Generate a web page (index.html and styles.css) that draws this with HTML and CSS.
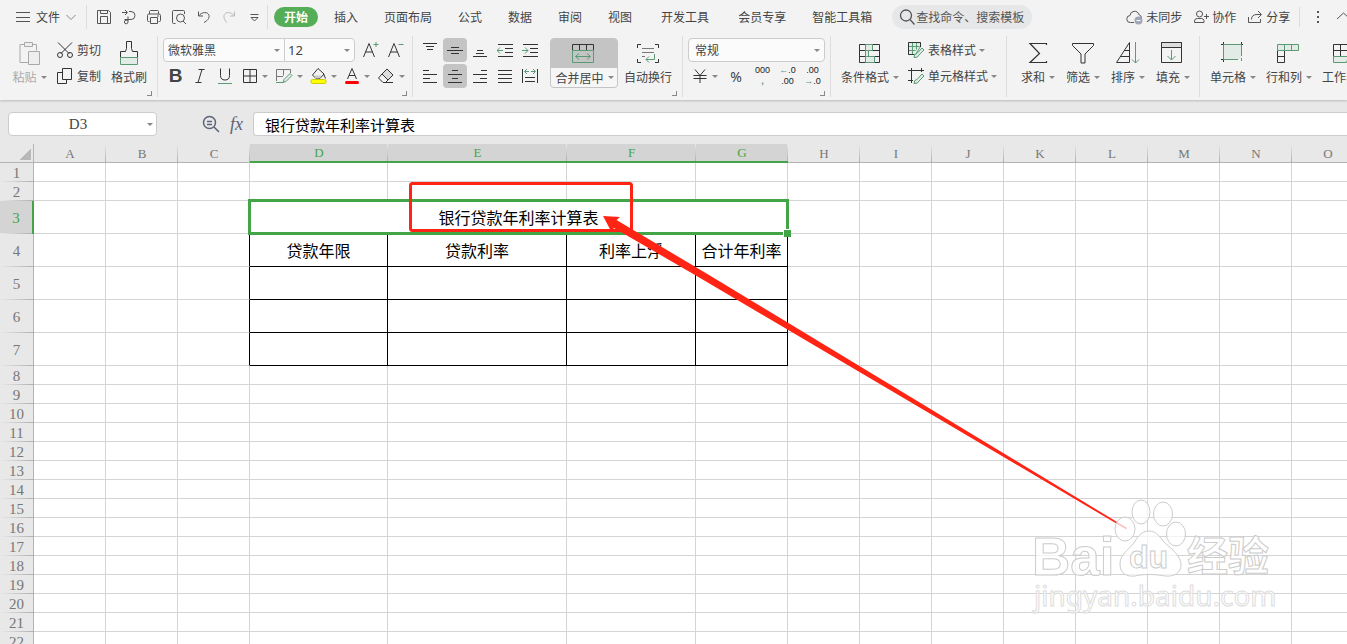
FILE: index.html
```html
<!DOCTYPE html>
<html lang="zh-CN">
<head>
<meta charset="utf-8">
<title>银行贷款年利率计算表</title>
<link rel="stylesheet" href="styles.css">
</head>
<body>
<header class="top">
  <nav class="tabs">
    <button class="file"><svg class="ic" width="16" height="16" viewBox="0 0 16 16"><path d="M1 3.500h14M1 8.500h14M1 12.500h14"/></svg>文件<svg class="ic grey" width="12" height="8" viewBox="0 0 12 8"><path d="M1.500 2l4.500 4.500L10.500 2"/></svg></button>
    <div class="quick">
      <button aria-label="保存"><svg class="ic" width="16" height="16" viewBox="0 0 16 16"><path d="M1.500 1.500h11l2 2v11h-13zM4.500 14v-6.500h7V14M4.500 1.500v3h7v-3"/></svg></button>
      <button aria-label="输出"><svg class="ic" width="16" height="16" viewBox="0 0 16 16"><path d="M1 3.500h5M4 1l2.500 2.500L4 6M8 2.500h2a4 4 0 0 1 0 8H3.500M7 7.500v5.500a1.800 1.800 0 1 1-1.800-1.800H7"/></svg></button>
      <button aria-label="打印"><svg class="ic" width="16" height="16" viewBox="0 0 16 16"><path d="M3.500 5V2.500q0-1 1-1h7q1 0 1 1V5M3.500 12.500h-1q-1 0-1-1v-5q0-1.500 1.500-1.500h10q1.500 0 1.500 1.500v5q0 1-1 1h-1M4.500 8.500h7v6h-7zM11 7h2"/></svg></button>
      <button aria-label="打印预览"><svg class="ic" width="16" height="16" viewBox="0 0 16 16"><path d="M4.500 14.500h-2q-1 0-1-1v-11q0-1 1-1h10q1 0 1 1V5M12 12l3 3"/><circle cx="9.500" cy="9" r="4"/></svg></button>
      <button aria-label="撤销"><svg class="ic" width="16" height="16" viewBox="0 0 16 16"><path d="M2.500 2.500v4.500h4.500M2.500 7C6 2.500 12 2.500 13 6.500c.5 3-2 5.500-5 7"/></svg></button>
      <button aria-label="恢复"><svg class="ic pale" width="16" height="16" viewBox="0 0 16 16"><path d="M13.500 2.500v4.500H9M13.500 7C10 2.500 4 2.500 3 6.500c-.5 3 1 5 3 7"/></svg></button>
      <button aria-label="更多"><svg class="ic" width="16" height="16" viewBox="0 0 16 16"><path d="M4.500 5.500h8M5 8.500h7l-3.500 3.500z"/></svg></button>
    </div>
    <button class="tab active">开始</button>
    <button class="tab">插入</button>
    <button class="tab">页面布局</button>
    <button class="tab">公式</button>
    <button class="tab">数据</button>
    <button class="tab">审阅</button>
    <button class="tab">视图</button>
    <button class="tab wide">开发工具</button>
    <button class="tab">会员专享</button>
    <button class="tab">智能工具箱</button>
    <label class="search"><svg class="ic" width="18" height="18" viewBox="0 0 18 18"><g stroke-width="1.300"><circle cx="8" cy="7.500" r="5.500"/><path d="M12 11.500l4.500 5"/></g></svg><input type="text" aria-label="查找命令" placeholder="查找命令、搜索模板"></label>
    <div class="account">
      <button><svg class="ic" width="17" height="16" viewBox="0 0 17 16"><path d="M8 13.500H4.500A3.500 3.500 0 0 1 4 6.500a4.500 4.500 0 0 1 8.800-1A4 4 0 0 1 15.500 9"/><circle cx="12.500" cy="11.500" r="4" fill="#a0a7b8" stroke="none"/><path d="M10.500 11.500h4" stroke="#fff"/></svg>未同步</button>
      <button><svg class="ic" width="16" height="16" viewBox="0 0 16 16"><circle cx="6.500" cy="5" r="3"/><path d="M1.500 13.500v-1.500q0-2.500 3-2.500h4q2 0 2.500 2v2zM11 7.500h5M13.500 5v5"/></svg>协作</button>
      <button><svg class="ic" width="16" height="16" viewBox="0 0 16 16"><path d="M1.500 8v5.500h12V10M4.500 10.500q0-5 5.500-5h4M11 2l3.500 3.500L11 9"/></svg>分享</button>
    </div>
    <button class="dots" aria-label="选项"><svg width="4" height="16" viewBox="0 0 4 16" fill="#555"><path d="M1 2h2v2H1zM1 7h2v2H1zM1 12h2v2H1z"/></svg></button>
    <button class="fold" aria-label="收起"><svg class="ic" width="16" height="16" viewBox="0 0 16 16"><path d="M1 10l6.500-6L14 10"/></svg></button>
  </nav>

  <div class="ribbon">
    <section class="group clip">
      <button class="big off"><svg class="ic" width="24" height="26" viewBox="0 0 24 26"><path d="M7.500 4.500h-4.500v18h8M15 4.500h4.500v6" stroke="#aaa"/><path d="M7.500 2.500h8v4h-8zM11.500 11.500h11v13h-11z" fill="#eee" stroke="#aaa"/></svg><span class="lb">粘贴<i class="caret"></i></span></button>
      <div class="stack">
        <button class="row"><svg class="ic dark" width="18" height="18" viewBox="0 0 18 18"><path d="M2 1.500l11 11M16 1.500l-11 11"/><circle cx="4" cy="14" r="2.500"/><circle cx="14" cy="14" r="2.500"/></svg>剪切</button>
        <button class="row"><svg class="ic dark" width="18" height="18" viewBox="0 0 18 18"><path d="M6.500 1.500h9v11h-9zM6.500 5.500h-5v11h9v-4"/></svg>复制</button>
      </div>
      <button class="big"><svg class="ic dark" width="20" height="26" viewBox="0 0 20 26"><path d="M7.500 1.500h5v7l1 3h5v6M7.500 1.500v7l-1 3h-5v6"/><path d="M1.500 17.500h17v7h-17z" class="g gf"/></svg><span class="lb">格式刷</span></button>
      <i class="launch"></i>
    </section>

    <section class="group font">
      <div class="line">
        <div class="box name"><select aria-label="字体"><option>微软雅黑</option></select><i class="caret"></i></div>
        <div class="box size"><select aria-label="字号"><option>12</option></select><i class="caret"></i></div>
        <button class="tool grow" aria-label="增大字号"><svg class="ic dark" width="17" height="18" viewBox="0 0 17 18"><path d="M1.500 16L7 2.500 12.500 16M3.500 11h7"/><path class="g" d="M11.500 3.500h5M14 1v5"/></svg></button>
        <button class="tool" aria-label="减小字号"><svg class="ic dark" width="17" height="18" viewBox="0 0 17 18"><path d="M1.500 16L7 2.500 12.500 16M3.500 11h7"/><path class="g" d="M11.500 3.500h5"/></svg></button>
      </div>
      <div class="line">
        <button class="tool bold">B</button>
        <button class="tool" aria-label="斜体"><svg class="ic dark" width="13" height="16" viewBox="0 0 13 16"><path d="M4.500 1.500h6M1.500 14.500h6M8 1.500l-4 13"/></svg></button>
        <button class="tool" aria-label="下划线"><svg class="ic dark" width="17" height="18" viewBox="0 0 17 18"><path d="M3.500 1.500v7q0 4.500 4.500 4.500t4.500-4.500v-7"/><path class="g" d="M1 16.500h14"/></svg></button>
        <button class="tool drop" aria-label="边框"><svg class="ic dark" width="16" height="16" viewBox="0 0 16 16"><path d="M1.500 1.500h13v13h-13zM8 1.500v13M1.500 8h13"/></svg><i class="caret"></i></button>
        <button class="tool drop" aria-label="绘图边框"><svg class="ic dark" width="18" height="16" viewBox="0 0 18 16"><path d="M8 8.500H1.500M8.500 1.500v6M15.500 5V1.500h-14V13" stroke="#777"/><path class="g gf" d="M9 11.500l6-6 2 2-6 6-3 1z"/><path class="g" d="M1 14.500h7"/></svg><i class="caret"></i></button>
        <button class="tool drop" aria-label="填充颜色"><svg class="ic dark" width="17" height="18" viewBox="0 0 17 18"><path d="M8 1.500l6 5.500-4 4.500H6L2.500 8z" /><path d="M4 8.500h8l-2.500 3H6z" fill="#ccc" stroke="none"/><path d="M13.500 6.500l2 5"/><rect x="1" y="12.500" width="15" height="4" rx="1.500" fill="#ff0" stroke="#cc0"/></svg><i class="caret"></i></button>
        <button class="tool drop" aria-label="字体颜色"><svg class="ic dark" width="16" height="18" viewBox="0 0 16 18"><path d="M3.500 12L8 1.500 12.500 12M5 8.500h6"/><rect x="1" y="14" width="14" height="3" rx="1.500" fill="#f00" stroke="none"/></svg><i class="caret"></i></button>
        <button class="tool drop" aria-label="清除"><svg class="ic dark" width="18" height="18" viewBox="0 0 18 18"><path d="M10 2l6 6-5 5-6-6z" fill="#ddd"/><path d="M5 7l-3.500 4L6 15.500h2.500L11 13M7 15.500h9"/></svg><i class="caret"></i></button>
      </div>
      <i class="launch"></i>
    </section>

    <section class="group align">
      <div class="aligns">
        <button aria-label="顶端对齐"><svg class="ic dark" width="16" height="16" viewBox="0 0 16 16"><path d="M1 1.500h14M4 4.500h8M5 7.500h6"/></svg></button>
        <button class="on" aria-label="垂直居中"><svg class="ic dark" width="16" height="16" viewBox="0 0 16 16"><path d="M4 5.500h8M0 8.500h16M4 11.500h8"/></svg></button>
        <button aria-label="底端对齐"><svg class="ic dark" width="16" height="16" viewBox="0 0 16 16"><path d="M5 8.500h6M4 11.500h8M1 14.500h14"/></svg></button>
        <button aria-label="减少缩进"><svg class="ic dark" width="16" height="16" viewBox="0 0 16 16"><path d="M1 2.500h15M8 6.500h8M8 10.500h8M1 14.500h15"/><path class="g" d="M0 8.500h6M3 5.500l-3 3 3 3"/></svg></button>
        <button aria-label="增加缩进"><svg class="ic dark" width="16" height="16" viewBox="0 0 16 16"><path d="M1 2.500h15M8 6.500h8M8 10.500h8M1 14.500h15"/><path class="g" d="M0 8.500h6M3 5.500l3 3-3 3"/></svg></button>
        <button aria-label="左对齐"><svg class="ic dark" width="16" height="16" viewBox="0 0 16 16"><path d="M1 2.500h6M1 6.500h14M1 10.500h7M1 14.500h14"/></svg></button>
        <button class="on" aria-label="水平居中"><svg class="ic dark" width="16" height="16" viewBox="0 0 16 16"><path d="M5 2.500h6M1 6.500h14M5 10.500h6M1 14.500h14"/></svg></button>
        <button aria-label="右对齐"><svg class="ic dark" width="16" height="16" viewBox="0 0 16 16"><path d="M9 2.500h6M1 6.500h14M8 10.500h7M1 14.500h14"/></svg></button>
        <button aria-label="两端对齐"><svg class="ic dark" width="16" height="16" viewBox="0 0 16 16"><path d="M1 2.500h14M1 6.500h14M1 10.500h14M1 14.500h14"/></svg></button>
        <button aria-label="分散对齐"><svg class="ic dark" width="16" height="16" viewBox="0 0 16 16"><path d="M.5 1v14M15.500 1v14M3 9.500h10M3 13.500h10"/><path class="g" d="M3 3.500h4M5 1L2.500 3.500 5 6M9 3.500h4M11 1l2.500 2.500L11 6"/></svg></button>
      </div>
      <button class="big merge"><svg class="ic dark" width="24" height="26" viewBox="1 0 24 26"><path d="M1.500 10V4.500h21V10M8.500 4.500V10M15.500 4.500V10"/><path class="g" d="M1.500 10.500h21v12h-21zM5 16.500h14M8 13.500l-3.500 3 3.500 3M16 13.500l3.500 3-3.500 3"/></svg><span class="lb">合并居中<i class="caret"></i></span></button>
      <button class="big"><svg class="ic dark" width="24" height="26" viewBox="0 0 24 26"><path d="M5 4.500H1.500V8M19 4.500h3.500V8M5 22.500H1.500V19M19 22.500h3.500V19"/><path d="M6 8.500h12M6 12.500h12M6 16.500h3" stroke="#777"/><path class="g" d="M18.500 14v5.500H10M13 16.500l-3 3 3 3"/></svg><span class="lb">自动换行</span></button>
      <i class="launch"></i>
    </section>

    <section class="group number">
      <div class="line"><div class="box format"><select aria-label="数字格式"><option>常规</option></select><i class="caret"></i></div></div>
      <div class="line">
        <button class="tool drop" aria-label="货币"><svg class="ic dark" width="16" height="16" viewBox="0 0 16 16"><path d="M3 1.500l5 6 5-6M1.500 7.500h13M1.500 10.500h13M8 7.500V15"/></svg><i class="caret"></i></button>
        <button class="tool pct">%</button>
        <button class="tool digits"><span>000</span><b>,</b></button>
        <button class="tool digits"><span><b>←</b>.0</span><span>.00</span></button>
        <button class="tool digits"><span>.00</span><span><b>→</b>.0</span></button>
      </div>
      <i class="launch"></i>
    </section>

    <section class="group styles">
      <button class="big"><svg class="ic dark" width="24" height="26" viewBox="1 0 24 26"><path d="M2.500 4.500h20v18h-20zM2.500 10.500h20M2.500 16.500h20M8.500 4.500v18M15.500 4.500v6"/><path class="g gf" d="M8.500 4.500h7v6h-7zM8.500 10.500h3v6h-3zM8.500 16.500h9v6h-9z"/></svg><span class="lb">条件格式<i class="caret"></i></span></button>
      <div class="stack">
        <button class="row"><svg class="ic dark" width="18" height="18" viewBox="0 0 18 18"><path class="g gf" d="M1.500 1.500h12v4l-5 8h-7zM1.500 5.500h11M1.500 9.500h7M5.500 1.500v12M9.500 1.500v7"/><path d="M7 13.500H1.500v-12h12V6"/><path class="g gf" d="M7 16.500q0-4 3-4l5-5.500 2 2-5 5q-1 3-5 2.500"/></svg>表格样式<i class="caret"></i></button>
        <button class="row"><svg class="ic dark" width="18" height="18" viewBox="0 0 18 18"><path d="M1 3.500h16M4.500 1v15M1 13.500h5M14.500 1v4"/><path class="g gf" d="M7 16.500q0-4 3-4l5-5.500 2 2-5 5q-1 3-5 2.500"/></svg>单元格样式<i class="caret"></i></button>
      </div>
    </section>

    <section class="group edit">
      <button class="big"><svg class="ic dark" width="24" height="26" viewBox="0 0 24 26"><path d="M20.500 5V3.500H4l9.500 10-9.500 9h16.500V21" stroke-width="1.200"/></svg><span class="lb">求和<i class="caret"></i></span></button>
      <button class="big"><svg class="ic dark" width="24" height="26" viewBox="0 0 24 26"><path d="M1.500 3.500h21v2l-8.500 8.500v9h-4v-9L1.500 5.500z"/></svg><span class="lb">筛选<i class="caret"></i></span></button>
      <button class="big"><svg class="ic dark" width="24" height="26" viewBox="1 0 24 26"><path d="M14.500 2.500v20h-13zM14.500 10.500H9M14.500 16.500H5.500"/><path class="g" d="M20.500 2v21M17 19.500l3.500 3.500 3.500-3.500"/></svg><span class="lb">排序<i class="caret"></i></span></button>
      <button class="big"><svg class="ic dark" width="24" height="26" viewBox="2 0 24 26"><path d="M2.500 2.500h20v20h-20z"/><path d="M2.500 2.500h20v5h-20z" fill="#ddd"/><path class="g" d="M12.500 10v10M8.500 16l4 4 4-4"/></svg><span class="lb">填充<i class="caret"></i></span></button>
    </section>

    <section class="group cells">
      <button class="big"><svg class="ic dark" width="24" height="26" viewBox="2 0 24 26"><path d="M4.500 2v20M22.500 2v4M2 4.500h22M2 19.500h5"/><path class="gf" stroke="none" d="M5 5h17v14H5z"/><path class="g" d="M22.500 16V4.500h-18v15H19M22.500 18v3"/></svg><span class="lb">单元格<i class="caret"></i></span></button>
      <button class="big"><svg class="ic dark" width="24" height="26" viewBox="1 0 24 26"><path d="M1.500 10.500h7v12h-7zM1.500 16.500h7"/><path class="g gf" d="M1.500 4.500h21v6h-21zM8.500 4.500v6M15.500 4.500v6"/></svg><span class="lb">行和列<i class="caret"></i></span></button>
      <button class="big"><svg class="ic dark" width="24" height="26" viewBox="1 0 24 26"><path d="M1.500 4.500h21v12h-21zM1.500 10.500h21M8.500 4.500v12M15.500 4.500v12"/><path class="g gf" d="M1.500 16.500h15l-2 6h-13z"/></svg><span class="lb">工作表<i class="caret"></i></span></button>
    </section>
  </div>
</header>

<div class="formula">
  <label class="ref"><input type="text" aria-label="名称框" value="D3"><i class="caret"></i></label>
  <button class="lens" aria-label="浏览公式"><svg class="ic slate" width="18" height="18" viewBox="0 0 18 18"><circle cx="7.500" cy="7.500" r="6"/><path d="M5 6.500h5M5 9.500h5M12 12l5 5"/></svg></button>
  <button class="fx">fx</button>
  <input class="content" type="text" aria-label="编辑栏" value="银行贷款年利率计算表">
</div>

<main class="sheet">
  <table class="grid">
    <colgroup><col class="c-head"><col span="3"><col class="c-d"><col class="c-e"><col class="c-f"><col class="c-g"><col span="8"></colgroup>
    <thead><tr id="letters"><th class="corner" aria-label="全选"></th></tr></thead>
    <tbody id="rows"></tbody>
  </table>
  <svg class="mark" width="1140" height="400" viewBox="0 0 1140 400">
    <rect x="410.500" y="39.500" width="221" height="47" rx="2"/>
    <path d="M603 72l17 1-3.500 3L709 131 1127 384l-1 1.200L695 131 614 84l-3 3z"/>
  </svg>
  <svg class="water" width="248" height="120" viewBox="0 0 248 120">
    <g>
      <ellipse cx="95" cy="31" rx="10" ry="12"/><ellipse cx="111" cy="14" rx="9" ry="12"/><ellipse cx="133" cy="16" rx="9.500" ry="12"/><ellipse cx="146" cy="36" rx="9.500" ry="12"/>
      <path d="M119 33c8 0 11 7 16 12 7 6 16 13 16 22 0 8-7 12-16 11-10-2-22-2-30 0-9 1-15-3-15-12 0-9 8-14 13-20 4-5 7-13 16-13z"/>
    </g>
    <text class="bai" x="2" y="77">Bai</text><text class="du" x="99" y="70">du</text><text class="jy" x="157" y="73">经验</text><text class="url" x="4" y="108">jingyan.baidu.com</text>
  </svg>
</main>
<script src="script.js"></script>
</body>
</html>
```
FILE: styles.css
```css
* { box-sizing: border-box; }
body { margin: 0; height: 100vh; display: flex; flex-direction: column; overflow: hidden; background: #e8e8e8; color: #444; font: 12px/18px "Noto Sans CJK SC", sans-serif; }
button, input, select { font: inherit; color: inherit; border: 0; background: none; padding: 0; margin: 0; outline: 0; }
button { white-space: nowrap; flex: none; display: flex; align-items: center; justify-content: center; }
svg { display: block; flex: none; }
.ic { fill: none; stroke: #555; }
.ic.dark { stroke: #333; }
.ic.grey { stroke: #888; }
.ic.pale { stroke: #bbb; }
.ic.slate { stroke: #5b6478; stroke-width: 1.500; }
.g { stroke: #5a9a75; }
.gf { fill: #e2ebe5; }
.caret { flex: none; border: 3px solid transparent; border-top-color: #888; border-bottom: 0; }

.top { flex: none; background: #f3f3f3; box-shadow: 0 1px 2px #bbb; position: relative; height: 100px; overflow: hidden; }
.tabs { display: flex; align-items: center; height: 34px; overflow: hidden; }
.file { width: 87px; height: 24px; gap: 5px; padding-left: 6px; border-right: 1px solid #ddd; }
.quick { display: flex; flex: none; padding: 0 1px 0 4px; margin-right: 6px; height: 24px; border-right: 1px solid #ddd; }
.quick button { width: 25px; }
.tab { padding: 0 13px; height: 20px; }
.tab.wide { padding: 0 16px; }
.tab.active { padding: 0 10px; margin-right: 3px; border-radius: 10px; background: #55ad58; color: #fff; font-weight: bold; }
.search { flex: none; display: flex; align-items: center; width: 140px; height: 24px; margin-left: 7px; padding-left: 6px; border-radius: 12px; background: #e6e7e9; }
.search input { width: 112px; }
.search input::placeholder { color: #555; opacity: 1; }
.account { display: flex; flex: none; gap: 11px; margin-left: 94px; padding-right: 9px; height: 20px; border-right: 1px solid #ddd; }
.account button { gap: 3px; }
.dots { width: 36px; }

.ribbon { display: flex; padding-top: 2px; }
.group { position: relative; flex: none; display: flex; height: 61px; padding-top: 2px; border-right: 1px solid #ddd; }
.group:last-child { border: 0; }
.big { flex-direction: column; gap: 2px; height: 50px; padding-top: 2px; justify-content: flex-start; }
.lb { display: flex; align-items: center; gap: 4px; line-height: 18px; }
.off { color: #aaa; }
.stack { display: flex; flex-direction: column; gap: 2px; }
.row { height: 24px; gap: 3px; justify-content: flex-start; }
.launch { position: absolute; right: 5px; bottom: 1px; width: 5px; height: 5px; border: solid #888; border-width: 0 1px 1px 0; }
.line { display: flex; height: 24px; }
.tool { width: 25px; height: 24px; }
.drop { width: 34px; gap: 4px; }
.box { flex: none; display: flex; align-items: center; height: 24px; padding: 0 4px; border: 1px solid #ccc; background: #fbfbfb; }
.box select { appearance: none; flex: 1; min-width: 0; }

.clip { width: 158px; padding-left: 6px; }
.clip .big { width: 46px; }
.clip .stack { width: 54px; padding-left: 4px; }
.font { flex-direction: column; gap: 2px; width: 255px; padding-left: 5px; }
.name { width: 122px; border-radius: 4px 0 0 4px; }
.size { width: 71px; margin-left: -1px; padding-left: 3px; border-radius: 0 4px 4px 0; }
.size select { font: 13px "Noto Sans", sans-serif; }
.grow { margin-left: 3px; }
.bold { font: bold 19px "Liberation Sans", sans-serif; }
.align { width: 270px; padding-left: 5px; }
.aligns { display: grid; grid-template-columns: repeat(5, 24px); gap: 2px 1px; margin-right: 8px; grid-auto-rows: 24px; }
.on { background: #c4c4c4; border-radius: 4px; }
.merge { width: 68px; padding-top: 1px; margin-right: 6px; border: 1px solid #c4c4c4; border-radius: 4px; background: #c4c4c4; }
.merge .lb { width: 100%; height: 20px; line-height: 16px; justify-content: center; background: #f6f6f6; border-radius: 0 0 3px 3px; }
.number { flex-direction: column; gap: 2px; width: 148px; padding-left: 5px; }
.format { width: 137px; border-radius: 4px; padding-left: 6px; }
.pct { font: 14px "Noto Sans", sans-serif; width: 28px; }
.digits { flex-direction: column; font: 9px/11px "Liberation Sans", sans-serif; color: #222; width: 25px; align-items: center; }
.digits span, .digits > b { display: block; }
.digits b { color: #5a9a75; }
.styles { width: 176px; padding-left: 10px; gap: 9px; }
.edit { width: 193px; padding-left: 10px; gap: 4px; }
.edit .big { width: 41px; }
.cells { padding-left: 10px; gap: 11px; }
.big .caret { margin-right: -1px; }

.formula { flex: none; display: flex; align-items: center; height: 44px; padding: 4px 0 0 8px; }
.ref { display: flex; align-items: center; width: 149px; height: 24px; padding-right: 3px; border: 1px solid #ccc; border-radius: 4px; background: #fff; }
.ref input { flex: 1; min-width: 0; text-align: center; font: 15px "Liberation Serif", serif; }
.lens { width: 18px; margin-left: 45px; }
.fx { width: 33px; font: italic 18px "Liberation Serif", serif; color: #5b6478; }
.content { flex: 1; min-width: 0; height: 24px; padding-left: 11px; border: 1px solid #ccc; border-right: 0; border-radius: 4px 0 0 4px; background: #fff; color: #000; font-size: 15px; }

.sheet { position: relative; flex: 1; min-height: 0; overflow: hidden; background: #fff; }
.grid { table-layout: fixed; width: 1364px; border-collapse: separate; border-spacing: 0; }
.c-head { width: 34px; }
.c-d { width: 138px; }
.c-e { width: 179px; }
.c-f { width: 129px; }
.c-g { width: 92px; }
.grid tr { height: 19px; }
.grid tr.tall { height: 33px; }
.grid th, .grid td { padding: 0; line-height: 16px; border: solid #d4d4d4; border-width: 0 1px 1px 0; text-align: center; vertical-align: middle; }
.grid th { color: #777; font: 15px/16px "Liberation Serif", serif; }
.grid thead th { padding-top: 2px; border-right: 0; border-bottom-color: #b3b3b3; background: linear-gradient(#e8e8e8, #b0b0b0) right / 1px 100% no-repeat #e8e8e8; font-size: 13px; }
.grid tbody th { border-bottom: 0; border-right-color: #b3b3b3; background: linear-gradient(to right, #e8e8e8, #b0b0b0) bottom / 100% 1px no-repeat #e8e8e8; }
.grid th.sel { background-color: #d4d4d4; color: #43a547; }
.grid thead th.sel { padding-top: 1px; border-bottom: 2px solid #43a547; }
.grid tbody th.sel { border-right: 2px solid #43a547; }
.grid thead th.corner { background: linear-gradient(135deg, transparent 50%, #b8b8b8 50%) 20px 5px / 11px 11px no-repeat #e8e8e8; border-right: 1px solid #b3b3b3; }
.grid td { color: #000; font-size: 16px; white-space: nowrap; }
.grid td.ink { border-color: #000; }
.grid td.ink-left { border-right-color: #000; }
.grid td.picked { position: relative; }
.picked::before { content: ""; position: absolute; inset: -2px; border: 3px solid #43a547; }
.picked::after { content: ""; position: absolute; right: -4px; bottom: -4px; width: 7px; height: 7px; border: solid #fff; border-width: 1px 0 0 1px; background: #43a547; }

.mark { position: absolute; left: 0; top: 0; }
.mark rect { fill: none; stroke: #ff2414; stroke-width: 3; }
.mark path { fill: #ff2414; }
.water { position: absolute; right: 69px; bottom: 26px; fill: #fff; fill-opacity: .7; stroke: #ccc; stroke-width: 1; }
.bai { font: bold 53px "Liberation Sans", sans-serif; }
.du { font: bold 32px "Liberation Sans", sans-serif; }
.jy { font: bold 41px "Noto Sans CJK SC", sans-serif; }
.url { font: 28px "Noto Sans", sans-serif; stroke: #ddd; }
```
FILE: script.js
```js
const letters = 'ABCDEFGHIJKLMNO';
const values = {
  D3: '银行贷款年利率计算表',
  D4: '贷款年限', E4: '贷款利率', F4: '利率上浮', G4: '合计年利率'
};

const head = document.getElementById('letters');
for (const letter of letters) {
  const th = document.createElement('th');
  th.textContent = letter;
  if ('DEFG'.includes(letter)) th.className = 'sel';
  head.append(th);
}

const body = document.getElementById('rows');
for (let n = 1; n <= 22; n++) {
  const tr = body.insertRow();
  if (n >= 3 && n <= 7) tr.className = 'tall';
  const th = document.createElement('th');
  th.textContent = n;
  if (n === 3) th.className = 'sel';
  tr.append(th);
  for (const letter of letters) {
    if (n === 3 && 'EFG'.includes(letter)) continue;
    const td = tr.insertCell();
    td.textContent = values[letter + n] || '';
    if (n === 3 && letter === 'D') {
      td.colSpan = 4;
      td.className = 'picked';
    } else if (n >= 4 && n <= 7) {
      if ('DEFG'.includes(letter)) td.className = 'ink';
      if (letter === 'C') td.className = 'ink-left';
    }
  }
}
```
